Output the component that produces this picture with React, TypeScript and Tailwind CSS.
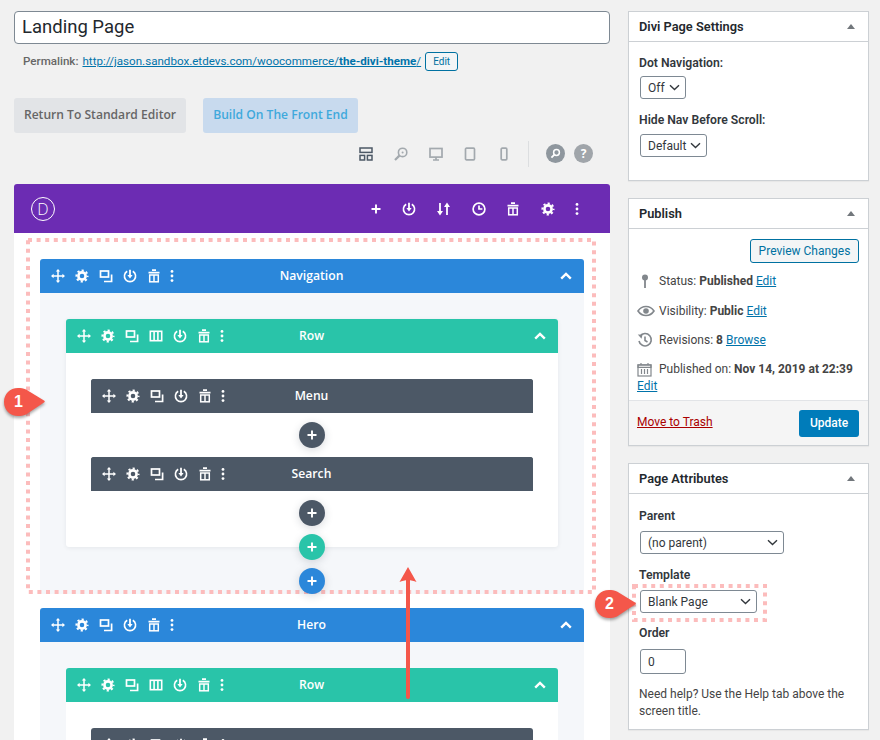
import type { ReactNode } from 'react';

function Move() {
  return (
    <svg width="14" height="14" viewBox="0 0 14 14" fill="#fff" stroke="#fff" strokeWidth="1.5">
      <path d="M7 1.5v11M1.5 7h11" fill="none" />
      <path d="M7 0l2.2 2.6H4.8zM7 14l-2.2-2.6h4.4zM0 7l2.6-2.2v4.4zM14 7l-2.6 2.2V4.8z" stroke="none" />
    </svg>
  );
}

function Gear() {
  return (
    <svg width="14" height="14" viewBox="0 0 14 14" fill="none" stroke="#fff">
      <circle cx="7" cy="7" r="3.6" strokeWidth="2.6" />
      <circle cx="7" cy="7" r="5.6" strokeWidth="1.9" strokeDasharray="2.2 2.2" strokeDashoffset="1.1" />
    </svg>
  );
}

function Clone() {
  return (
    <svg width="14" height="14" viewBox="0 0 14 14" fill="none" stroke="#fff" strokeWidth="1.7">
      <rect x="1.5" y="2" width="8" height="6" />
      <path d="M12.6 5.5v7H5" />
    </svg>
  );
}

function Power() {
  return (
    <svg width="14" height="14" viewBox="0 0 14 14" fill="none" stroke="#fff" strokeWidth="1.6">
      <path d="M4.2 2.2a5.6 5.6 0 1 0 5.6 0" />
      <path d="M7 0.8v6.4" strokeWidth="1.8" />
      <path d="M4.4 6L7 9.4 9.6 6z" fill="#fff" stroke="none" />
    </svg>
  );
}

function Trash() {
  return (
    <svg width="14" height="14" viewBox="0 0 14 14" fill="none" stroke="#fff">
      <path d="M5 1.2h4M1.5 3.6h11" strokeWidth="1.7" />
      <rect x="2.7" y="6" width="8.6" height="6.8" strokeWidth="1.5" />
      <path d="M7 6v6.8" strokeWidth="1.5" />
    </svg>
  );
}

function Dots() {
  return (
    <svg width="4" height="14" viewBox="0 0 4 14" fill="#fff">
      <circle cx="2" cy="2.4" r="1.4" />
      <circle cx="2" cy="7" r="1.4" />
      <circle cx="2" cy="11.6" r="1.4" />
    </svg>
  );
}

function Columns() {
  return (
    <svg width="14" height="14" viewBox="0 0 14 14" fill="none" stroke="#fff" strokeWidth="1.6">
      <rect x="1.3" y="2.3" width="11.4" height="9.4" />
      <path d="M5.1 2.3v9.4M8.9 2.3v9.4" />
    </svg>
  );
}

function Plus({ size = 10 }: { size?: number }) {
  return (
    <svg width={size} height={size} viewBox="0 0 10 10" stroke="#fff" strokeWidth="1.9">
      <path d="M5 0.5v9M0.5 5h9" />
    </svg>
  );
}

function ChevronUp() {
  return (
    <svg width="12" height="8" viewBox="0 0 12 8" fill="none" stroke="#fff" strokeWidth="2.4">
      <path d="M1.2 6.6L6 2l4.8 4.6" />
    </svg>
  );
}

function ChevronDown() {
  return (
    <svg width="11" height="7" viewBox="0 0 11 7" fill="none" stroke="#32373c" strokeWidth="1.4">
      <path d="M1 1.2l4.5 4.3L10 1.2" />
    </svg>
  );
}

function BarHeader({ color, title, icons, chevron }: { color: string; title: string; icons: ReactNode; chevron?: boolean }) {
  return (
    <div className={`grid h-[34px] grid-cols-[1fr_auto_1fr] items-center rounded-t-[3px] ${color} pl-[11px] pr-[12px] text-white`}>
      <div className="flex items-center">{icons}</div>
      <span className="text-[12.2px] font-semibold">{title}</span>
      <div className="flex justify-end">{chevron && <ChevronUp />}</div>
    </div>
  );
}

function Tool({ children, w = 'w-[24px]' }: { children: ReactNode; w?: string }) {
  return <span className={`flex ${w} justify-start`}>{children}</span>;
}

function SectionIcons() {
  return (
    <>
      <Tool><Move /></Tool>
      <Tool><Gear /></Tool>
      <Tool><Clone /></Tool>
      <Tool><Power /></Tool>
      <Tool w="w-[23px]"><Trash /></Tool>
      <Tool><Dots /></Tool>
    </>
  );
}

function RowIcons() {
  return (
    <>
      <Tool><Move /></Tool>
      <Tool><Gear /></Tool>
      <Tool><Clone /></Tool>
      <Tool><Columns /></Tool>
      <Tool><Power /></Tool>
      <Tool w="w-[23px]"><Trash /></Tool>
      <Tool><Dots /></Tool>
    </>
  );
}

function Module({ title }: { title: string }) {
  return (
    <div className="rounded-[3px] bg-[#4c5866]">
      <BarHeader color="bg-[#4c5866]" title={title} icons={<SectionIcons />} />
    </div>
  );
}

function AddButton({ color }: { color: string }) {
  return (
    <div className={`relative z-10 mx-auto flex h-[26px] w-[26px] items-center justify-center rounded-full ${color} shadow-[0_2px_8px_rgba(43,55,70,0.18)]`}>
      <Plus />
    </div>
  );
}

function Builder() {
  return (
    <div className="mt-[14px] overflow-hidden rounded-t-[3px] bg-white font-['Open_Sans',sans-serif]">
      <div className="flex h-[49px] items-center justify-between bg-[#6c2cb3] pl-[17px] pr-[31px] text-white">
        <div className="flex h-[24px] w-[24px] items-center justify-center rounded-full border-[1.5px] border-white text-[16px] font-light">
          D
        </div>
        <div className="flex items-center gap-[20.5px]">
          <Plus size={10} />
          <Power />
          <svg width="15" height="14" viewBox="0 0 15 14" fill="none" stroke="#fff" strokeWidth="1.8">
            <path d="M4 1v10M11 3v10" />
            <path d="M1 9l3 4.5L7 9zM8 5l3-4.5L14 5z" fill="#fff" stroke="none" />
          </svg>
          <svg width="14" height="14" viewBox="0 0 14 14" fill="none" stroke="#fff" strokeWidth="1.7">
            <circle cx="7" cy="7" r="5.9" />
            <path d="M7 3.4V7h3.4" />
          </svg>
          <Trash />
          <Gear />
          <span className="flex"><Dots /></span>
        </div>
      </div>
      <div className="px-[26px] pt-[26px]">
        <section className="rounded-[3px] bg-[#f5f7fa]">
          <BarHeader color="bg-[#2b87da]" title="Navigation" icons={<SectionIcons />} chevron />
          <div className="px-[26px] pt-[26px]">
            <div className="rounded-[3px] bg-white shadow-[0_1px_4px_rgba(43,55,70,0.08)]">
              <BarHeader color="bg-[#29c4a9]" title="Row" icons={<RowIcons />} chevron />
              <div className="flex flex-col gap-[9px] px-[25px] pb-[21px] pt-[26px]">
                <Module title="Menu" />
                <AddButton color="bg-[#4c5866]" />
                <Module title="Search" />
                <AddButton color="bg-[#4c5866]" />
              </div>
            </div>
            <div className="-mt-[13px]"><AddButton color="bg-[#29c4a9]" /></div>
            <div className="-mb-[13px] mt-[8px]"><AddButton color="bg-[#2b87da]" /></div>
          </div>
        </section>
        <section className="mt-[27px] rounded-[3px] bg-[#f5f7fa]">
          <BarHeader color="bg-[#2b87da]" title="Hero" icons={<SectionIcons />} chevron />
          <div className="px-[26px] pt-[26px]">
            <div className="rounded-[3px] bg-white">
              <BarHeader color="bg-[#29c4a9]" title="Row" icons={<RowIcons />} chevron />
              <div className="px-[25px] pt-[26px]">
                <div className="flex h-[34px] items-center rounded-[3px] bg-[#4c5866] pl-[11px]">
                  <SectionIcons />
                </div>
              </div>
            </div>
          </div>
        </section>
      </div>
    </div>
  );
}

function PageTools() {
  return (
    <div className="mt-[4px] flex h-[33px] items-center justify-end pr-[17px]">
      <svg width="14" height="14" viewBox="0 0 14 14" fill="none" stroke="#4c5866" strokeWidth="1.5">
        <rect x="1" y="1" width="12" height="4.4" />
        <rect x="1" y="8.4" width="4.6" height="4.6" />
        <rect x="8.4" y="8.4" width="4.6" height="4.6" />
      </svg>
      <svg className="ml-[21px]" width="14" height="14" viewBox="0 0 14 14" fill="none" stroke="#a3a9ae" strokeWidth="1.6">
        <circle cx="8.6" cy="5.4" r="4.2" />
        <path d="M5.4 8.6L1 13" strokeWidth="2.2" />
        <circle cx="8.6" cy="5.4" r="1" fill="#a3a9ae" stroke="none" />
      </svg>
      <svg className="ml-[21px]" width="14" height="14" viewBox="0 0 14 14" fill="none" stroke="#a3a9ae" strokeWidth="1.7">
        <rect x="1" y="1.5" width="12" height="8.6" />
        <path d="M7 10v2.4M4 13h6" />
      </svg>
      <svg className="ml-[21px]" width="12" height="14" viewBox="0 0 12 14" fill="none" stroke="#a3a9ae" strokeWidth="1.7">
        <rect x="1.5" y="1.2" width="9" height="11.6" rx="1" />
      </svg>
      <svg className="ml-[24px]" width="8" height="14" viewBox="0 0 8 14" fill="none" stroke="#a3a9ae" strokeWidth="1.7">
        <rect x="1.2" y="1.2" width="5.6" height="11.6" rx="1" />
      </svg>
      <div className="ml-[20px] mr-[17px] h-[26px] w-px bg-[#dcdee0]" />
      <div className="flex h-[19px] w-[19px] items-center justify-center rounded-full bg-[#8f979e]">
        <svg width="11" height="11" viewBox="0 0 11 11" fill="none" stroke="#fff" strokeWidth="1.5">
          <circle cx="6.5" cy="4.5" r="2.9" />
          <path d="M4.4 6.6L1.4 9.6" strokeWidth="1.9" />
        </svg>
      </div>
      <div className="ml-[9px] flex h-[19px] w-[19px] items-center justify-center rounded-full bg-[#a0a5aa] text-[12px] font-bold text-white font-['Open_Sans',sans-serif]">
        ?
      </div>
    </div>
  );
}

function Panel({ title, children }: { title: string; children: ReactNode }) {
  return (
    <div className="border border-[#ccd0d4] bg-white shadow-[0_1px_1px_rgba(0,0,0,0.04)]">
      <div className="flex h-[30px] items-center justify-between border-b border-[#ccd0d4] pl-[10px] pr-[13px]">
        <h2 className="text-[12.8px] font-semibold text-[#23282d]">{title}</h2>
        <span className="h-0 w-0 border-x-[4px] border-b-[5px] border-x-transparent border-b-[#72777c]" />
      </div>
      {children}
    </div>
  );
}

function Select({ value, w, mt, tall }: { value: string; w: string; mt: string; tall?: boolean }) {
  return (
    <div className={`flex ${tall ? 'h-[24px]' : 'h-[23px]'} ${w} ${mt} ml-px items-center justify-between rounded-[3px] border border-[#7e8993] bg-white pl-[7px] pr-[5px] text-[12px] text-[#32373c]`}>
      <span>{value}</span>
      <ChevronDown />
    </div>
  );
}

function Label({ children, mt }: { children: ReactNode; mt: string }) {
  return <div className={`${mt} text-[12.2px] font-semibold leading-[16px] text-[#32373c]`}>{children}</div>;
}

function Misc({ icon, children, mt }: { icon: ReactNode; children: ReactNode; mt: string }) {
  return (
    <div className={`${mt} flex h-[18px] items-center`}>
      <span className="flex w-[22px] shrink-0 justify-start">{icon}</span>
      <span className="whitespace-nowrap">{children}</span>
    </div>
  );
}

function Sidebar() {
  return (
    <aside className="flex w-[241px] shrink-0 flex-col gap-[17px] font-['Roboto',sans-serif] text-[12px] text-[#444]">
      <Panel title="Divi Page Settings">
        <div className="h-[138px] px-[10px] pt-[13px]">
          <Label mt="">Dot Navigation:</Label>
          <Select value="Off" w="w-[46px]" mt="mt-[5px]" />
          <Label mt="mt-[13px]">Hide Nav Before Scroll:</Label>
          <Select value="Default" w="w-[67px]" mt="mt-[6px]" />
        </div>
      </Panel>
      <Panel title="Publish">
        <div className="h-[171px] pl-[8px] pr-[9px] pt-[10px]">
          <div className="flex justify-end">
            <div className="flex h-[24px] w-[109px] items-center justify-center rounded-[3px] border border-[#0071a1] bg-[#f3f5f6] text-[#0071a1]">
              Preview Changes
            </div>
          </div>
          <Misc
            mt="mt-[9px]"
            icon={
              <svg width="16" height="16" viewBox="0 0 16 16" fill="#82878c">
                <circle cx="8" cy="4.5" r="3" />
                <rect x="7.1" y="6" width="1.8" height="9" />
              </svg>
            }
          >
            Status: <b>Published</b> <a className="text-[#0073aa] underline">Edit</a>
          </Misc>
          <Misc
            mt="mt-[12px]"
            icon={
              <svg width="18" height="16" viewBox="0 0 18 16" fill="none" stroke="#82878c" strokeWidth="1.6">
                <path d="M1 8c2-3 4.800-4.500 8-4.500S15 5 17 8c-2 3-4.800 4.500-8 4.500S3 11 1 8z" />
                <circle cx="9" cy="8" r="2.800" fill="#82878c" stroke="none" />
              </svg>
            }
          >
            Visibility: <b>Public</b> <a className="text-[#0073aa] underline">Edit</a>
          </Misc>
          <Misc
            mt="mt-[11px]"
            icon={
              <svg width="16" height="16" viewBox="0 0 16 16" fill="none" stroke="#82878c" strokeWidth="1.6">
                <path d="M3 4.200A6.200 6.200 0 1 1 2 9" />
                <path d="M8 4.500V8.500l2.500 1.500" />
                <path d="M0.800 2.500l4.700 0.300-1 4z" fill="#82878c" stroke="none" />
              </svg>
            }
          >
            Revisions: <b>8</b> <a className="text-[#0073aa] underline">Browse</a>
          </Misc>
          <Misc
            mt="mt-[11px]"
            icon={
              <svg width="15" height="15" viewBox="0 0 15 15" fill="none" stroke="#82878c" strokeWidth="1.2">
                <rect x="1" y="3" width="13" height="11" />
                <path d="M1 2.800h13v2.500H1zM4 1v2.500M11 1v2.500M4.500 7v5M7.500 7v5M10.500 7v5" />
              </svg>
            }
          >
            Published on: <b>Nov 14, 2019 at 22:39</b>
          </Misc>
          <a className="block leading-[16px] text-[#0073aa] underline">Edit</a>
        </div>
        <div className="flex h-[45px] items-center justify-between border-t border-[#e2e4e7] bg-[#f5f5f5] pl-[8px] pr-[9px]">
          <a className="-mt-[2px] text-[#a00] underline">Move to Trash</a>
          <div className="flex h-[27px] w-[60px] items-center justify-center rounded-[3px] bg-[#007cba] font-medium text-white">
            Update
          </div>
        </div>
      </Panel>
      <Panel title="Page Attributes">
        <div className="h-[235px] px-[10px] pt-[14px]">
          <Label mt="">Parent</Label>
          <Select value="(no parent)" w="w-[144px]" mt="mt-[7px]" />
          <Label mt="mt-[13px]">Template</Label>
          <Select value="Blank Page" w="w-[117px]" mt="mt-[7px]" />
          <Label mt="mt-[12px]">Order</Label>
          <div className="ml-px mt-[8px] flex h-[25px] w-[46px] items-center rounded-[3px] border border-[#7e8993] bg-white pl-[7px] text-[#32373c]">
            0
          </div>
          <p className="mt-[12px] leading-[17px]">Need help? Use the Help tab above the screen title.</p>
        </div>
      </Panel>
    </aside>
  );
}

function Badge({ n, className }: { n: string; className: string }) {
  return (
    <div className={`absolute h-[34px] w-[46px] ${className}`}>
      <svg width="46" height="34" viewBox="0 0 46 34" className="drop-shadow-[0_2px_1.500px_rgba(0,0,0,0.35)]">
        <path d="M15 2c3 0 5 0 8 1.500L41 14.500c1 .6 1 1.400 0 2L23 28.500C20 30 18 30 15 30 7 30 1 24 1 16S7 2 15 2z" fill="#f4574a" />
      </svg>
      <span className="absolute left-[11px] top-[6px] font-['Liberation_Sans',sans-serif] text-[16px] font-bold leading-[20px] text-white">{n}</span>
    </div>
  );
}

export default function App() {
  return (
    <div className="relative flex h-[740px] w-[880px] gap-[18px] overflow-hidden bg-[#f1f1f1] pl-[14px] pt-[11px] font-['Roboto',sans-serif]">
      <main className="w-[596px] shrink-0">
        <div className="flex h-[33px] items-center rounded-[4px] border border-[#7e8993] bg-white pl-[7px] pt-px text-[18.5px] text-[#23282d]">
          Landing Page
        </div>
        <div className="mt-[8px] flex h-[19px] items-center pl-[9px] text-[11.6px] text-[#666]">
          <span className="font-medium">Permalink:</span>
          <a className="ml-[4px] whitespace-nowrap text-[#0073aa] underline">
            http://jason.sandbox.etdevs.com/woocommerce/<b>the-divi-theme</b>/
          </a>
          <div className="ml-[4px] flex h-[19px] w-[33px] items-center justify-center rounded-[3px] border border-[#0071a1] bg-[#f3f5f6] text-[10px] text-[#0071a1]">
            Edit
          </div>
        </div>
        <div className="mt-[27px] flex gap-[17px] font-['Open_Sans',sans-serif] text-[12.1px] font-semibold">
          <div className="flex h-[35px] w-[172px] items-center justify-center rounded-[3px] bg-[#e2e4e7] text-[#666]">
            Return To Standard Editor
          </div>
          <div className="flex h-[35px] w-[155px] items-center justify-center rounded-[3px] bg-[#c8daee] text-[#3fa9dc]">
            Build On The Front End
          </div>
        </div>
        <PageTools />
        <Builder />
      </main>
      <Sidebar />

      <svg className="pointer-events-none absolute inset-0" width="880" height="740" fill="none" stroke="#fcbcbc" strokeWidth="4" strokeDasharray="4 4.600">
        <rect x="28" y="240" width="566" height="352" />
        <rect x="634" y="586" width="131" height="34" />
        <path d="M408 697V580" stroke="#f4574a" strokeWidth="4" strokeDasharray="none" strokeLinecap="round" />
        <path d="M408 567l8.500 15c-5-2.500-12-2.500-17 0z" fill="#f4574a" stroke="none" />
      </svg>
      <Badge n="1" className="left-[3px] top-[386px]" />
      <Badge n="2" className="left-[594px] top-[588px]" />
    </div>
  );
}
